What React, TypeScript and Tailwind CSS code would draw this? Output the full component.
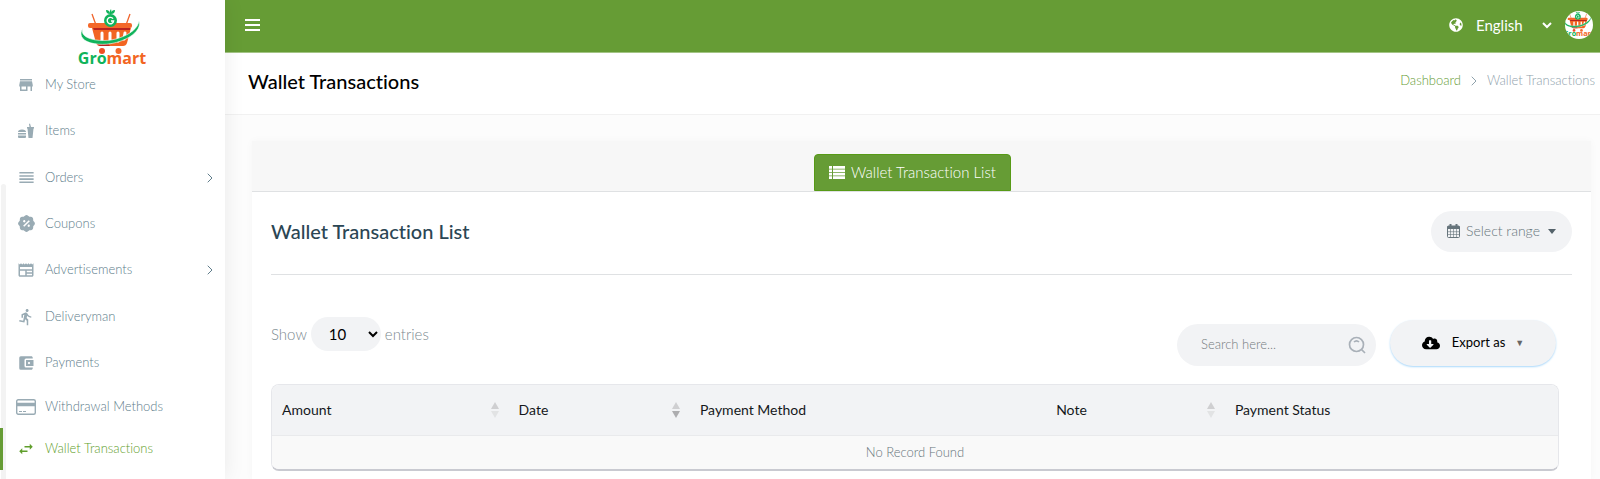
import type { ReactNode } from 'react';
import {
  MdAccountBalanceWallet,
  MdDirectionsRun,
  MdNewspaper,
  MdReorder,
  MdStore,
  MdSwapHoriz,
} from 'react-icons/md';
import { RiDiscountPercentFill } from 'react-icons/ri';
import { FaCloudDownloadAlt, FaGlobeAmericas } from 'react-icons/fa';
import { ChevronRight } from 'lucide-react';

interface NavItem {
  label: string;
  icon: ReactNode;
  height: string;
  expandable?: boolean;
  active?: boolean;
}

const navItems: NavItem[] = [
  { label: 'My Store', icon: <MdStore size={18} />, height: 'h-[46px]' },
  { label: 'Items', icon: <FoodIcon />, height: 'h-[47px]' },
  { label: 'Orders', icon: <MdReorder size={19} />, height: 'h-[46px]', expandable: true },
  { label: 'Coupons', icon: <RiDiscountPercentFill size={19} />, height: 'h-[46px]' },
  { label: 'Advertisements', icon: <MdNewspaper size={18} />, height: 'h-[47px]', expandable: true },
  { label: 'Deliveryman', icon: <MdDirectionsRun size={18} />, height: 'h-[46px]' },
  { label: 'Payments', icon: <MdAccountBalanceWallet size={18} />, height: 'h-[46px]' },
  { label: 'Withdrawal Methods', icon: <CardIcon />, height: 'h-[42px]' },
  { label: 'Wallet Transactions', icon: <MdSwapHoriz size={18} />, height: 'h-[42px]', active: true },
];

interface Column {
  label: string;
  width: string;
  sort?: 'none' | 'desc';
}

const columns: Column[] = [
  { label: 'Amount', width: 'w-[18.4%]', sort: 'none' },
  { label: 'Date', width: 'w-[14.1%]', sort: 'desc' },
  { label: 'Payment Method', width: 'w-[27.7%]' },
  { label: 'Note', width: 'w-[13.9%]', sort: 'none' },
  { label: 'Payment Status', width: 'w-[25.9%]' },
];

function Logo({ className }: { className?: string }) {
  return (
    <svg viewBox="0 0 70 62" className={className} role="img" aria-label="Gromart">
      <path d="M14 6l4 11M52 6l-4 11" stroke="#f0642c" strokeWidth="1.300" fill="none" />
      <path d="M14 20h39l-4 15q-1 3-4 3H22q-3 0-4-3z" fill="#f26522" />
      <path d="M15 20h37v2H16zM17 32l3 5q1 1 3 1h9l-4-5z" fill="#b9231f" />
      <rect x="10" y="15" width="44" height="5" rx="2" fill="#f4682a" />
      <path d="M24 25v8M32 25v9M40 25v8M47 25l-1 6" stroke="#fff" strokeWidth="3" strokeLinecap="round" />
      <path d="M5 20C0 31 22 35 38 31C52 27 60 20 61 13C64 23 50 32 36 35C19 39-4 34 5 20z" fill="#10b35b" stroke="#fff" strokeWidth=".6" />
      <circle cx="32.500" cy="12.500" r="6.500" fill="#10b35b" />
      <path d="M32 6q-4 0-4-4 4 0 4 4q-1-3 1-5 1 2 0 5 0-4 4-4 0 4-4 4z" fill="#10b35b" />
      <path d="M35 10.700a3.200 3.200 0 1 0 .6 2.300H33" fill="none" stroke="#fff" strokeWidth="1.400" />
      <circle cx="24" cy="43" r="3" fill="#f04e23" />
      <circle cx="40.500" cy="43" r="3" fill="#f4682a" />
      <text x="34" y="56" textAnchor="middle" fontFamily="Open Sans, sans-serif" fontWeight="700" fontSize="16" fill="#10b35b">
        Gro<tspan fill="#f26522">mart</tspan>
      </text>
    </svg>
  );
}

function FoodIcon() {
  return (
    <svg viewBox="0 0 16 16" className="h-4 w-4" fill="currentColor" aria-hidden="true">
      <path d="M0 9q0-2.500 4-2.500T8 9zM0 10h8v1.500H0zM0 12.500h8V14q0 1-1 1H1q-1 0-1-1z" />
      <path d="M9 4h2.500L11 1l1-.5L13 4h3v1.500h-.5L14.500 15h-4L9.500 5.500H9z" />
    </svg>
  );
}

function CardIcon() {
  return (
    <svg viewBox="0 0 20 16" className="h-4 w-5 shrink-0" fill="none" stroke="currentColor" aria-hidden="true">
      <rect x=".7" y=".7" width="18.600" height="14.600" rx="1.500" strokeWidth="1.400" />
      <path d="M0 5.500h20" strokeWidth="3.500" />
      <path d="M3 12.500h3M7 12.500h3" strokeWidth="1.200" />
    </svg>
  );
}

function ListIcon() {
  return (
    <svg viewBox="0 0 16 13" className="h-[13px] w-4" fill="currentColor" aria-hidden="true">
      {[0, 3.400, 6.800, 10.200].map((y) => (
        <path key={y} d={`M0 ${y}h3v2.700H0zM4 ${y}h12v2.700H4z`} />
      ))}
    </svg>
  );
}

function CalendarIcon() {
  return (
    <svg viewBox="0 0 13 14" className="h-[14px] w-[13px]" fill="none" stroke="currentColor" aria-hidden="true">
      <rect x=".5" y="2" width="12" height="11.500" rx="1" />
      <path d="M.5 3.500h12" strokeWidth="3" />
      <path d="M3.500 0v4M9.500 0v4" strokeWidth="2" />
      <path d="M3.500 5v8.500M6.500 5v8.500M9.500 5v8.500M.5 7.700h12M.5 10.500h12" strokeWidth=".6" />
    </svg>
  );
}

function SortIcon({ desc }: { desc: boolean }) {
  return (
    <svg viewBox="0 0 8 16" className="h-4 w-2" aria-hidden="true">
      <path d="M4 0l4 7H0z" fill="#cfcfd1" />
      <path d="M4 16l4-7H0z" fill={desc ? '#adadaf' : '#e2e3e4'} />
    </svg>
  );
}

function Sidebar() {
  return (
    <aside className="relative z-10 w-[225px] shrink-0 bg-white shadow-[0_0_20px_rgba(0,0,0,0.08)]">
      <div className="absolute left-px top-[184px] bottom-0 w-[5px] rounded-t bg-[#f3f3f3]" />
      <div className="flex h-[62px] justify-center pt-2">
        <Logo className="h-[62px] w-[70px] shrink-0" />
      </div>
      <nav>
        {navItems.map((item) => (
          <a
            key={item.label}
            href="#"
            className={`relative flex items-center border-l-[3px] pb-px pl-[13px] pr-[7px] text-[13px] ${item.height} ${
              item.active ? 'border-[#669c35] text-[#5f9e2b]' : 'border-transparent text-[#607d8b]'
            }`}
          >
            <span className={`flex w-5 justify-center ${item.active ? '' : 'text-[#99abb4]'}`}>{item.icon}</span>
            <span className="ml-[9px] flex-1">{item.label}</span>
            {item.expandable && <ChevronRight size={16} strokeWidth={1.5} />}
          </a>
        ))}
      </nav>
    </aside>
  );
}

function Header() {
  return (
    <header className="flex h-[53px] items-center justify-between border-b border-[#a3c485] bg-[#669c35] pb-[2px] pl-5 pr-[7px] text-white">
      <button type="button" aria-label="Toggle menu" className="flex w-[15px] flex-col gap-[2px] [&>span]:h-[2px] [&>span]:bg-white">
        <span />
        <span className="mt-px" />
        <span className="mt-px" />
      </button>
      <div className="flex items-center">
        <FaGlobeAmericas size={14} />
        <select aria-label="Language" className="ml-[9px] mr-[10px] w-[83px] bg-transparent font-normal text-[15px]">
          <option>English</option>
        </select>
        <button type="button" aria-label="Account" className="flex h-7 w-7 items-center justify-center overflow-hidden rounded-full bg-white">
          <Logo className="h-7 w-8 shrink-0" />
        </button>
      </div>
    </header>
  );
}

function Toolbar() {
  return (
    <div className="flex items-start justify-between pr-4 pt-[45px]">
      <label className="mt-[-3px] flex items-center gap-1 text-[15px] text-[#7c8a90]">
        Show
        <select className="h-[34px] w-[70px] rounded-full bg-[#f2f3f5] pl-[14px] font-normal text-black">
          <option>10</option>
        </select>
        entries
      </label>
      <div className="flex items-end gap-[14px]">
        <label className="flex h-[42px] w-[199px] items-center rounded-full bg-[#f2f3f5] pl-6 pr-[10px]">
          <input
            type="text"
            aria-label="Search"
            placeholder="Search here..."
            className="min-w-0 flex-1 bg-transparent text-[13px] outline-none placeholder:text-[#757b80]"
          />
          <svg viewBox="0 0 18 18" className="h-[18px] w-[18px] text-[#a9b0b8]" fill="none" stroke="currentColor" strokeWidth="1.700" aria-hidden="true">
            <circle cx="8.500" cy="8.500" r="7" />
            <path d="M13.500 13.500l3.500 3.500M6 6q2.500-2.500 5 0" />
          </svg>
        </label>
        <button
          type="button"
          className="flex h-[46px] w-[166px] items-center justify-center rounded-full bg-[#f2f3f5] text-[13px] font-normal text-black shadow-[0_1px_2px_#a9d8fb]"
        >
          <FaCloudDownloadAlt size={18} />
          <span className="ml-3">Export as</span>
          <span className="ml-[10px] text-[9px] text-[#666]">▼</span>
        </button>
      </div>
    </div>
  );
}

function TransactionTable() {
  return (
    <div className="mr-[13px] mt-[18px] overflow-hidden rounded-lg border border-b-2 border-[#e6e7eb] border-b-[#c9cad1]">
      <table className="w-full table-fixed text-left text-sm">
        <thead className="bg-[#f2f3f5] text-[#15181b]">
          <tr className="h-[50px] border-b border-[#e9eaec]">
            {columns.map((col) => (
              <th key={col.label} className={`px-[10px] font-normal ${col.width}`}>
                <div className="flex items-center justify-between">
                  {col.label}
                  {col.sort && <SortIcon desc={col.sort === 'desc'} />}
                </div>
              </th>
            ))}
          </tr>
        </thead>
        <tbody>
          <tr className="h-[34px] bg-[#f9f9f9] text-center text-[13px] text-[#67757c]">
            <td colSpan={5}>No Record Found</td>
          </tr>
        </tbody>
      </table>
    </div>
  );
}

export default function App() {
  return (
    <div className="flex min-h-screen bg-[#fcfcfc] font-['Lato',sans-serif] font-light [font-variant-ligatures:none]">
      <Sidebar />
      <div className="flex min-w-0 flex-1 flex-col">
        <Header />
        <div className="flex h-[62px] items-center justify-between border-b border-[#f1f1f1] bg-white pb-[5px] pl-[23px] pr-[5px]">
          <h1 className="text-xl font-medium text-black">Wallet Transactions</h1>
          <nav className="flex items-center text-[13px] text-[#8fa2ac]">
            <a href="#" className="text-[#669c35]">Dashboard</a>
            <ChevronRight size={16} strokeWidth={1.5} className="mx-[5px]" />
            <span>Wallet Transactions</span>
          </nav>
        </div>
        <main className="flex flex-1 flex-col pl-[27px] pr-[9px] pt-[26px]">
          <section className="flex-1 bg-white shadow-[0_0_8px_rgba(0,0,0,0.03)]">
            <div className="flex h-[51px] items-end justify-center border-b border-[#dfe1e3] bg-[#f7f7f7] pr-[18px]">
              <button type="button" className="flex h-[37px] items-center gap-[6px] rounded-t-sm border border-[#579a16] bg-[#669c35] px-[14px] text-[15px] text-white">
                <ListIcon />
                Wallet Transaction List
              </button>
            </div>
            <div className="px-[19px]">
              <div className="flex h-[83px] items-center justify-between border-b border-[#dfe1e3] pb-[4px]">
                <h2 className="text-xl font-medium text-[#2b4654]">Wallet Transaction List</h2>
                <button type="button" className="flex h-[41px] w-[141px] items-center justify-center gap-[6px] rounded-full bg-[#f2f3f5] text-sm text-[#67757c]">
                  <CalendarIcon />
                  Select range
                  <svg viewBox="0 0 8 5" className="ml-[2px] h-[5px] w-2" fill="#54626a" aria-hidden="true">
                    <path d="M0 0h8L4 5z" />
                  </svg>
                </button>
              </div>
              <Toolbar />
              <TransactionTable />
            </div>
          </section>
        </main>
      </div>
    </div>
  );
}
